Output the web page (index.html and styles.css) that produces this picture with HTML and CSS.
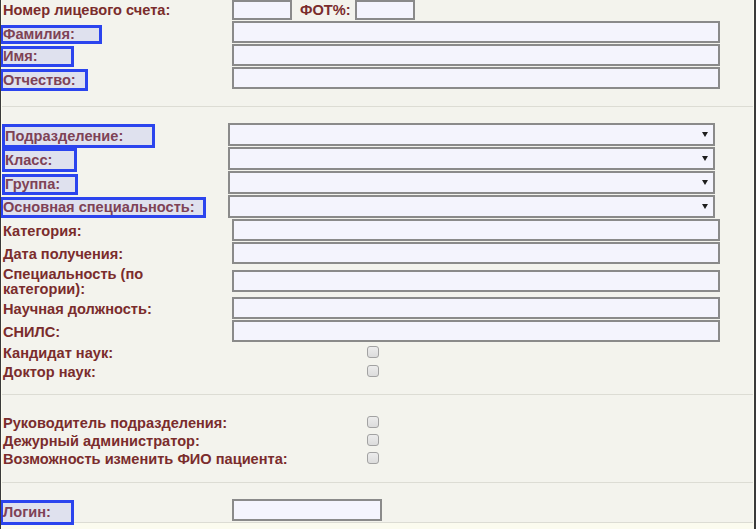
FILE: index.html
```html
<!DOCTYPE html>
<html lang="ru">
<head>
<meta charset="utf-8">
<title>Сотрудник</title>
<link rel="stylesheet" href="styles.css">
</head>
<body>
<div class="page">
  <div class="section sec-1">
    <div class="row row-top">
      <div class="cell-label"><span class="lbl">Номер лицевого счета:</span></div>
      <div class="cell-field">
        <input class="txt txt-small" type="text">
        <span class="lbl lbl-fot">ФОТ%:</span>
        <input class="txt txt-small txt-fot" type="text">
      </div>
    </div>
    <div class="row row-text">
      <div class="cell-label"><span class="hl hl-fam">Фамилия:</span></div>
      <div class="cell-field"><input class="txt" type="text"></div>
    </div>
    <div class="row row-text">
      <div class="cell-label"><span class="hl hl-name">Имя:</span></div>
      <div class="cell-field"><input class="txt" type="text"></div>
    </div>
    <div class="row row-text">
      <div class="cell-label"><span class="hl hl-patr">Отчество:</span></div>
      <div class="cell-field"><input class="txt" type="text"></div>
    </div>
  </div>

  <div class="section sec-2">
    <div class="row row-select">
      <div class="cell-label"><span class="hl hl-dept">Подразделение:</span></div>
      <div class="cell-field"><span class="select"><select class="sel"><option></option></select></span></div>
    </div>
    <div class="row row-select">
      <div class="cell-label"><span class="hl hl-class">Класс:</span></div>
      <div class="cell-field"><span class="select"><select class="sel"><option></option></select></span></div>
    </div>
    <div class="row row-select">
      <div class="cell-label"><span class="hl hl-group">Группа:</span></div>
      <div class="cell-field"><span class="select"><select class="sel"><option></option></select></span></div>
    </div>
    <div class="row row-select">
      <div class="cell-label"><span class="hl hl-spec">Основная специальность:</span></div>
      <div class="cell-field"><span class="select"><select class="sel"><option></option></select></span></div>
    </div>
    <div class="row row-text">
      <div class="cell-label"><span class="lbl lbl-low">Категория:</span></div>
      <div class="cell-field"><input class="txt" type="text"></div>
    </div>
    <div class="row row-text">
      <div class="cell-label"><span class="lbl lbl-low">Дата получения:</span></div>
      <div class="cell-field"><input class="txt" type="text"></div>
    </div>
    <div class="row row-tall">
      <div class="cell-label"><span class="lbl lbl-low lbl-wrap">Специальность (по категории):</span></div>
      <div class="cell-field"><input class="txt" type="text"></div>
    </div>
    <div class="row row-text">
      <div class="cell-label"><span class="lbl lbl-low">Научная должность:</span></div>
      <div class="cell-field"><input class="txt" type="text"></div>
    </div>
    <div class="row row-text">
      <div class="cell-label"><span class="lbl lbl-low">СНИЛС:</span></div>
      <div class="cell-field"><input class="txt" type="text"></div>
    </div>
    <div class="row row-check">
      <div class="cell-label"><span class="lbl lbl-low">Кандидат наук:</span></div>
      <div class="cell-field"><input class="chk" type="checkbox"></div>
    </div>
    <div class="row row-check">
      <div class="cell-label"><span class="lbl lbl-low">Доктор наук:</span></div>
      <div class="cell-field"><input class="chk" type="checkbox"></div>
    </div>
  </div>

  <div class="section sec-3">
    <div class="row row-check2">
      <div class="cell-label"><span class="lbl lbl-low">Руководитель подразделения:</span></div>
      <div class="cell-field"><input class="chk" type="checkbox"></div>
    </div>
    <div class="row row-check2">
      <div class="cell-label"><span class="lbl lbl-low">Дежурный администратор:</span></div>
      <div class="cell-field"><input class="chk" type="checkbox"></div>
    </div>
    <div class="row row-check2">
      <div class="cell-label"><span class="lbl lbl-low">Возможность изменить ФИО пациента:</span></div>
      <div class="cell-field"><input class="chk" type="checkbox"></div>
    </div>
  </div>

  <div class="section sec-4">
    <div class="row row-text">
      <div class="cell-label"><span class="hl hl-login">Логин:</span></div>
      <div class="cell-field"><input class="txt txt-login" type="text"></div>
    </div>
  </div>
</div>
</body>
</html>
```

FILE: styles.css
```css
html, body {
  margin: 0;
  padding: 0;
  background: #fbfbef;
}

body {
  font-family: "Liberation Sans", Arial, sans-serif;
  font-size: 14.6px;
  font-weight: bold;
  color: #7a2c2c;
}

.page {
  width: 756px;
  height: 529px;
  box-sizing: border-box;
  border-left: 1px solid #3a3a3a;
  border-right: 2px solid #3a3a3a;
  padding: 0 1px;
  overflow: hidden;
}

.section {
  background: #f3f3ed;
  border-bottom: 1px solid #dcdcd4;
  display: flex;
  flex-direction: column;
}

.sec-1 { padding: 0 0 16px 0; }
.sec-2 { padding: 16px 0 14px 0; gap: 1px; }
.sec-3 { padding: 18px 0 15px 0; }
.sec-4 { padding: 16px 0 1px 0; }

.row {
  display: flex;
  align-items: center;
  flex: none;
}

.row-top { height: 21px; align-items: flex-start; }
.sec-1 .row-text { height: 23px; align-items: flex-start; }
.row-text { height: 22px; }
.row-select { height: 23px; }
.row-tall { height: 31px; }
.row-check { height: 18px; }
.row-check2 { height: 18px; }

.cell-label {
  width: 226px;
  flex: none;
  display: flex;
  align-items: center;
  align-self: stretch;
  overflow: visible;
}

.row-top .cell-label { height: 21px; }

.cell-field {
  display: flex;
  align-items: center;
  flex: 1;
  align-self: stretch;
}

.row-top .cell-field,
.sec-1 .row-text .cell-field { align-items: flex-start; }

.lbl {
  padding-left: 1px;
  line-height: 15px;
  white-space: nowrap;
}

.lbl-low {
  padding-top: 2px;
}

.lbl-wrap {
  white-space: normal;
  width: 160px;
}

.lbl-fot {
  padding-left: 0;
  margin: 3px 4px 0 8px;
}

.hl {
  box-sizing: border-box;
  align-self: flex-start;
  border: 3px solid #2b44ee;
  background: #dfe1ee;
  color: #7e4256;
  display: flex;
  align-items: center;
  white-space: nowrap;
  flex: none;
  line-height: 15px;
}

.hl-fam   { margin: 4px 0 0 -2px; width: 102px; height: 19px; }
.hl-name  { margin: 2px 0 0 -2px; width: 74px;  height: 21px; }
.hl-patr  { margin: 2px 0 0 -2px; width: 88px;  height: 22px; }
.hl-dept  { margin: 1px 0 0 0;    width: 153px; height: 24px; }
.hl-class { margin: 1px 0 0 0;    width: 75px;  height: 24px; }
.hl-group { margin: 3px 0 0 0;    width: 76px;  height: 21px; }
.hl-spec  { margin: 2px 0 0 -2px; width: 206px; height: 21px; }
.hl-login { margin: 1px 0 0 -2px; width: 74px;  height: 25px; }

.txt {
  box-sizing: border-box;
  width: 488px;
  height: 22px;
  margin: 0 0 0 4px;
  padding: 0 3px;
  border: 2px solid #8a8a8a;
  background: #f4f4fd;
  font: inherit;
  outline: none;
}

.txt-small {
  width: 60px;
  height: 20px;
}

.txt-fot { margin-left: 0; }

.txt-login { width: 150px; }

.select {
  position: relative;
  display: block;
  width: 487px;
  height: 23px;
}

.sel {
  appearance: none;
  -webkit-appearance: none;
  box-sizing: border-box;
  width: 487px;
  height: 23px;
  margin: 0;
  border: 2px solid #8a8a8a;
  border-radius: 0;
  background: #f4f4fd;
  font: inherit;
  outline: none;
}

.select::after {
  content: "";
  position: absolute;
  right: 7px;
  top: 9px;
  width: 0;
  height: 0;
  border-left: 3px solid transparent;
  border-right: 3px solid transparent;
  border-top: 5px solid #1e1e1e;
}

.chk {
  appearance: none;
  -webkit-appearance: none;
  box-sizing: border-box;
  width: 12px;
  height: 12px;
  margin: 0 0 0 139px;
  border: 1px solid #a2a2a2;
  border-radius: 3px;
  background: linear-gradient(#ececec, #dcdcdc);
}
```
